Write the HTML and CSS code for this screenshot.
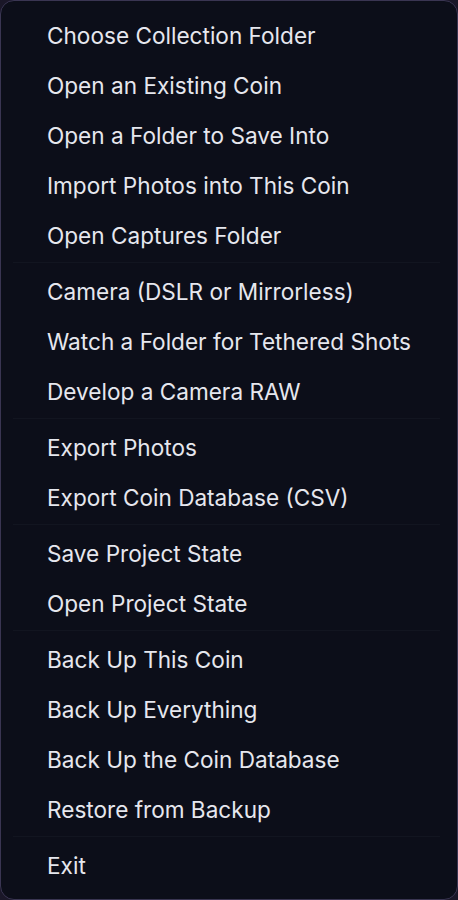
FILE: index.html
```html
<!DOCTYPE html>
<html lang="en">
<head>
<meta charset="utf-8">
<title>Menu</title>
<link rel="stylesheet" href="styles.css">
</head>
<body>
<nav class="menu">
  <div class="group">
    <div class="item">Choose Collection Folder</div>
    <div class="item">Open an Existing Coin</div>
    <div class="item">Open a Folder to Save Into</div>
    <div class="item">Import Photos into This Coin</div>
    <div class="item">Open Captures Folder</div>
  </div>
  <div class="sep"></div>
  <div class="group">
    <div class="item">Camera (DSLR or Mirrorless)</div>
    <div class="item">Watch a Folder for Tethered Shots</div>
    <div class="item">Develop a Camera RAW</div>
  </div>
  <div class="sep"></div>
  <div class="group">
    <div class="item">Export Photos</div>
    <div class="item">Export Coin Database (CSV)</div>
  </div>
  <div class="sep"></div>
  <div class="group">
    <div class="item">Save Project State</div>
    <div class="item">Open Project State</div>
  </div>
  <div class="sep"></div>
  <div class="group">
    <div class="item">Back Up This Coin</div>
    <div class="item">Back Up Everything</div>
    <div class="item">Back Up the Coin Database</div>
    <div class="item">Restore from Backup</div>
  </div>
  <div class="sep"></div>
  <div class="group">
    <div class="item">Exit</div>
  </div>
</nav>
</body>
</html>
```

FILE: styles.css
```css
html, body {
  margin: 0;
  padding: 0;
  background: #1a1728;
}
.menu {
  box-sizing: border-box;
  width: 458px;
  height: 900px;
  background: #0c0e19;
  border: 1px solid #3a3552;
  border-radius: 14px;
  padding: 9px 12px 8px 12px;
  font-family: Inter, "Noto Sans", sans-serif;
  font-size: 22.6px;
  color: #e6e7ee;
  display: flex;
  flex-direction: column;
}
.group {
  display: flex;
  flex-direction: column;
}
.item {
  height: 50px;
  display: flex;
  align-items: center;
  padding-left: 34px;
  white-space: nowrap;
}
.sep {
  height: 1px;
  background: #121520;
  margin: 2px 5px 3px 0;
}
```
